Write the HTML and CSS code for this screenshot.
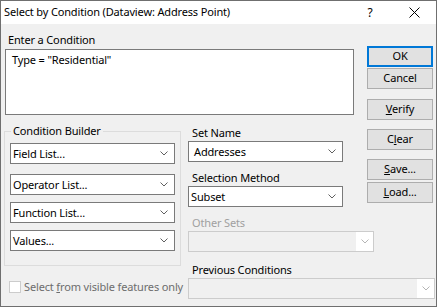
FILE: index.html
```html
<!DOCTYPE html>
<html lang="en">
<head>
    <meta charset="UTF-8">
    <title>Select by Condition</title>
    <link rel="stylesheet" href="styles.css">
</head>
<body>
    <div class="window">
        <div class="titlebar">
            <span class="title">Select by Condition (Dataview: Address Point)</span>
            <span class="tb-btn">?</span>
            <span class="tb-btn">
                <svg width="11" height="11" viewBox="0 0 11 11"><path d="M0.5 0.5 L10.5 10.5 M10.5 0.5 L0.5 10.5" stroke="#000" stroke-width="1" fill="none"/></svg>
            </span>
        </div>
        <div class="content">
            <div class="main">
                <div class="label cond-label">Enter a Condition</div>
                <div class="textbox">Type = "Residential"</div>
            </div>

            <div class="buttons">
                <div class="button default">OK</div>
                <div class="button">Cancel</div>
                <div class="button gap"><u>V</u>erify</div>
                <div class="button gap-sm">C<u>l</u>ear</div>
                <div class="button gap-sm"><u>S</u>ave...</div>
                <div class="button tight"><u>L</u>oad...</div>
            </div>

            <div class="lower">
                <div class="left-col">
                    <fieldset class="group">
                        <legend>Condition Builder</legend>
                        <div class="combo first"><span>Field List...</span><svg class="chev" width="8" height="5" viewBox="0 0 8 5"><polyline points="0.5,0.5 4,4 7.5,0.5"/></svg></div>
                        <div class="combo wide-gap"><span>Operator List...</span><svg class="chev" width="8" height="5" viewBox="0 0 8 5"><polyline points="0.5,0.5 4,4 7.5,0.5"/></svg></div>
                        <div class="combo"><span>Function List...</span><svg class="chev" width="8" height="5" viewBox="0 0 8 5"><polyline points="0.5,0.5 4,4 7.5,0.5"/></svg></div>
                        <div class="combo"><span>Values...</span><svg class="chev" width="8" height="5" viewBox="0 0 8 5"><polyline points="0.5,0.5 4,4 7.5,0.5"/></svg></div>
                    </fieldset>
                    <label class="check">
                        <span class="box"></span>
                        <span>Select <u>f</u>rom visible features only</span>
                    </label>
                </div>

                <div class="set-col">
                    <div class="label">Set Name</div>
                    <div class="combo set-combo"><span class="indent">Addresses</span><svg class="chev" width="8" height="5" viewBox="0 0 8 5"><polyline points="0.5,0.5 4,4 7.5,0.5"/></svg></div>

                    <div class="label next">Selection Method</div>
                    <div class="combo set-combo"><span>Subset</span><svg class="chev" width="8" height="5" viewBox="0 0 8 5"><polyline points="0.5,0.5 4,4 7.5,0.5"/></svg></div>

                    <div class="label next disabled">Other Sets</div>
                    <div class="combo off other-combo"><span></span><span class="drop"><svg class="chev" width="8" height="5" viewBox="0 0 8 5"><polyline points="0.5,0.5 4,4 7.5,0.5"/></svg></span></div>

                    <div class="label prev">Previous Conditions</div>
                    <div class="combo off prev-combo"><span></span><span class="drop"><svg class="chev" width="8" height="5" viewBox="0 0 8 5"><polyline points="0.5,0.5 4,4 7.5,0.5"/></svg></span></div>
                </div>
            </div>
        </div>
    </div>
</body>
</html>
```

FILE: styles.css
```css
body {
    margin: 0;
    font-family: "Noto Sans", "Open Sans", sans-serif;
    font-size: 11px;
    letter-spacing: -0.15px;
    color: #000;
    background: #fff;
}
.window {
    width: 437px;
    height: 307px;
    box-sizing: border-box;
    border: 1px solid #6f6f6f;
    background-color: #f0f0f0;
    overflow: hidden;
}
.titlebar {
    height: 23px;
    background: #fff;
    display: flex;
    align-items: center;
    padding-left: 3px;
}
.title {
    flex: 1;
    line-height: 14px;
    margin-top: -1px;
}
.tb-btn {
    width: 44px;
    height: 23px;
    display: flex;
    align-items: center;
    justify-content: center;
    font-size: 12px;
}

/* main grid */
.content {
    display: grid;
    grid-template-columns: 349px 66px;
    column-gap: 13px;
    padding: 9px 0 0 4px;
}
.main {
    grid-column: 1;
    grid-row: 1;
}
.buttons {
    grid-column: 2;
    grid-row: 1 / 3;
    margin-top: 13px;
}
.lower {
    grid-column: 1 / 3;
    grid-row: 2;
    display: flex;
}

.label {
    line-height: 14px;
    height: 14px;
    white-space: nowrap;
}
.cond-label {
    padding-left: 3px;
}
.textbox {
    margin-top: 2px;
    height: 66px;
    box-sizing: border-box;
    border: 1px solid #7a7a7a;
    background: #fff;
    padding: 3px 6px;
    line-height: 14px;
}

/* buttons */
.button {
    height: 21px;
    box-sizing: border-box;
    border: 1px solid #adadad;
    background-color: #e1e1e1;
    text-align: center;
    line-height: 18px;
    margin-top: 1px;
}
.button.default {
    border: 2px solid #0078d7;
    line-height: 16px;
    margin-top: 0;
}
.button.gap {
    margin-top: 10px;
}
.button.gap-sm {
    margin-top: 9px;
}
.button.tight {
    margin-top: 2px;
}

/* condition builder */
.left-col {
    width: 177px;
    flex-shrink: 0;
    margin-left: -1px;
}
.group {
    margin: 9px 0 0 0;
    padding: 0 5px;
    border: 1px solid #dcdcdc;
    height: 142px;
    box-sizing: border-box;
    min-width: 0;
}
.group legend {
    padding: 0 2px;
    margin-left: 1px;
    line-height: 14px;
}
.combo {
    height: 21px;
    box-sizing: border-box;
    border: 1px solid #7a7a7a;
    background: #fff;
    display: flex;
    align-items: center;
    justify-content: space-between;
    padding: 0 6px 0 2px;
    margin-top: 7px;
    white-space: nowrap;
}
.combo.first {
    margin-top: 5px;
}
.combo.wide-gap {
    margin-top: 10px;
}
.chev {
    fill: none;
    stroke: #606060;
    stroke-width: 1;
    display: block;
}

/* checkbox */
.check {
    display: flex;
    align-items: center;
    margin: 13px 0 0 5px;
    color: #6d6d6d;
    white-space: nowrap;
}
.check .box {
    flex-shrink: 0;
    width: 12px;
    height: 12px;
    box-sizing: border-box;
    border: 1px solid #cccccc;
    background: #fff;
    margin-right: 3px;
}

/* right column */
.set-col {
    margin-left: 7px;
    padding-top: 11px;
}
.set-col .label {
    padding-left: 4px;
}
.set-col .label.next {
    margin-top: 9px;
}
.set-col .label.prev {
    margin-top: 11px;
}
.set-col .combo {
    margin-top: 1px;
}
.set-combo {
    width: 155px;
}
.set-combo .indent {
    padding-left: 3px;
}
.label.disabled {
    color: #a0a0a0;
}
.combo.off {
    border-color: #cccccc;
    background: #f0f0f0;
    padding: 0;
}
.combo.off .drop {
    width: 17px;
    height: 19px;
    background: #fff;
    display: flex;
    align-items: center;
    justify-content: center;
}
.combo.off .chev {
    stroke: #b5b5b5;
}
.other-combo {
    width: 186px;
}
.prev-combo {
    width: 247px;
}
```
